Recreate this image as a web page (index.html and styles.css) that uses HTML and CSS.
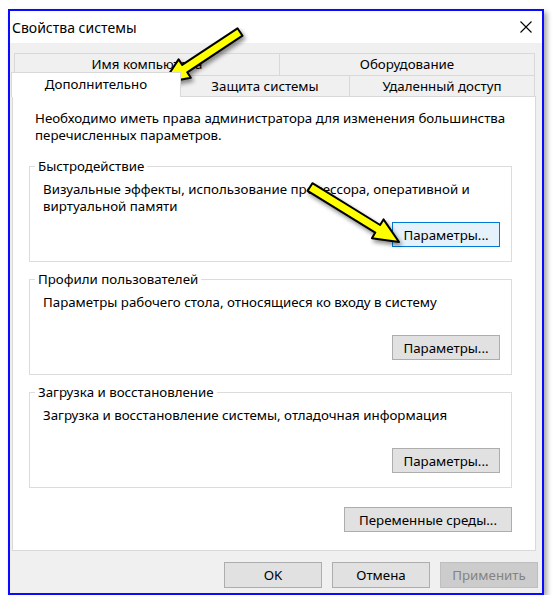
FILE: index.html
```html
<!DOCTYPE html>
<html>
<head>
  <meta charset="utf-8">
  <title>Свойства системы</title>
  <link rel="stylesheet" href="styles.css">
</head>
<body>
<div class="window">
  <div class="titlebar">
    <span class="title">Свойства системы</span>
    <svg class="close" width="12" height="12" viewBox="0 0 12 12">
      <path d="M0.5 0.5 L11.5 11.5 M11.5 0.5 L0.5 11.5" stroke="#000" stroke-width="1.1" fill="none"/>
    </svg>
  </div>

  <div class="content">
    <div class="tab-row back">
      <div class="tab first tab-name">Имя компьютера</div>
      <div class="tab tab-hw">Оборудование</div>
    </div>
    <div class="tab-row front">
      <div class="tab first active tab-adv">Дополнительно</div>
      <div class="tab tab-prot">Защита системы</div>
      <div class="tab tab-remote">Удаленный доступ</div>
    </div>

    <div class="panel">
      <p class="note">Необходимо иметь права администратора для изменения большинства<br>перечисленных параметров.</p>

      <div class="group">
        <div class="group-title">Быстродействие</div>
        <p class="group-text">Визуальные эффекты, использование процессора, оперативной и<br>виртуальной памяти</p>
        <button type="button" class="btn btn-params hover">Параметры...</button>
      </div>

      <div class="group">
        <div class="group-title">Профили пользователей</div>
        <p class="group-text">Параметры рабочего стола, относящиеся ко входу в систему</p>
        <button type="button" class="btn btn-params">Параметры...</button>
      </div>

      <div class="group">
        <div class="group-title">Загрузка и восстановление</div>
        <p class="group-text">Загрузка и восстановление системы, отладочная информация</p>
        <button type="button" class="btn btn-params">Параметры...</button>
      </div>

      <div class="env-row">
        <button type="button" class="btn btn-env">Переменные среды...</button>
      </div>
    </div>

    <div class="actions">
      <button type="button" class="btn btn-dlg">OK</button>
      <button type="button" class="btn btn-dlg">Отмена</button>
      <button type="button" class="btn btn-dlg" disabled>Применить</button>
    </div>
  </div>
</div>

<!-- yellow pointer arrows drawn over the dialog -->
<svg class="arrows" width="553" height="603" viewBox="0 0 553 603">
  <polygon points="237.5,28.3 182.2,64.9 178.6,59.4 163,83 190.8,77.8 187.2,72.3 242.5,35.7"/>
  <polygon points="312.4,183.2 380.1,225 383.5,219.4 399,242 371.9,238.2 375.3,232.6 307.6,190.8"/>
</svg>
</body>
</html>
```

FILE: styles.css
```css
body {
  margin: 0;
  background-color: #fff;
  font-family: "Noto Sans", "Liberation Sans", sans-serif;
  font-size: 13.3px;
  color: #000;
}
.window {
  position: relative;
  box-sizing: border-box;
  width: 536px;
  height: 586px;
  margin: 9px 0 0 8px;
  border: 2px solid #0a0aff;
  background-color: #f0f0f0;
  box-shadow: 3px 3px 5px rgba(0, 0, 0, 0.35);
}
.titlebar {
  display: flex;
  align-items: center;
  justify-content: space-between;
  height: 32px;
  padding: 0 10px 0 2px;
  background-color: #fff;
}
.title {
  font-size: 14px;
}
.close {
  display: block;
}
.content {
  height: 550px;
}

/* tabs */
.tab-row {
  display: flex;
  align-items: flex-start;
}
.tab-row.back {
  margin: 10px 0 0 4px;
}
.tab-row.front {
  margin-left: 1px;
}
.tab {
  box-sizing: border-box;
  height: 22px;
  line-height: 20px;
  text-align: center;
  border-top: 1px solid #d9d9d9;
  border-right: 1px solid #d9d9d9;
  background-color: #f0f0f0;
}
.tab.first {
  border-left: 1px solid #d9d9d9;
}
.front .tab {
  height: 21px;
}
.tab.active {
  position: relative;
  z-index: 1;
  height: 25px;
  margin: -3px 0 -1px;
  line-height: 22px;
  background-color: #fff;
}
.tab-name { width: 266px; }
.tab-hw { width: 255px; }
.tab-adv { width: 170px; }
.tab-prot { width: 169px; }
.tab-remote { width: 185px; }

/* tab page */
.panel {
  box-sizing: border-box;
  width: 524px;
  height: 455px;
  margin-left: 2px;
  border: 1px solid #d9d9d9;
  background-color: #fff;
}
.note {
  margin: 13px 0 0 22px;
  line-height: 17px;
}
.group {
  box-sizing: border-box;
  display: flex;
  flex-direction: column;
  width: 483px;
  height: 96px;
  margin: 17px 0 0 16px;
  padding: 0 11px 14px 13px;
  border: 1px solid #dcdcdc;
}
.group:first-of-type {
  margin-top: 22px;
}
.group-title {
  align-self: flex-start;
  margin: -8px 0 0 -8px;
  padding: 0 3px;
  line-height: 15px;
  background-color: #fff;
}
.group-text {
  margin: 7px 0 0;
  line-height: 17px;
}
.env-row {
  display: flex;
  justify-content: flex-end;
  width: 483px;
  margin: 19px 0 0 16px;
}

/* buttons */
.btn {
  box-sizing: border-box;
  height: 25px;
  padding: 0;
  font-family: inherit;
  font-size: 13.3px;
  color: #000;
  background-color: #e1e1e1;
  border: 1px solid #adadad;
}
.btn.hover {
  background-color: #e5f1fb;
  border-color: #0078d7;
}
.btn:disabled {
  color: #838383;
  background-color: #cccccc;
  border-color: #bfbfbf;
}
.btn-params {
  align-self: flex-end;
  width: 108px;
  margin-top: auto;
}
.btn-env {
  width: 168px;
}
.actions {
  display: flex;
  justify-content: flex-end;
  gap: 10px;
  margin-top: 11px;
  padding-right: 4px;
}
.btn-dlg {
  width: 98px;
  height: 26px;
}

.arrows {
  position: absolute;
  left: 0;
  top: 0;
  pointer-events: none;
  filter: drop-shadow(2px 3px 2px rgba(0, 0, 0, 0.45));
}
.arrows polygon {
  fill: #ffff00;
  stroke: #000;
  stroke-width: 2;
  stroke-linejoin: round;
}
```
